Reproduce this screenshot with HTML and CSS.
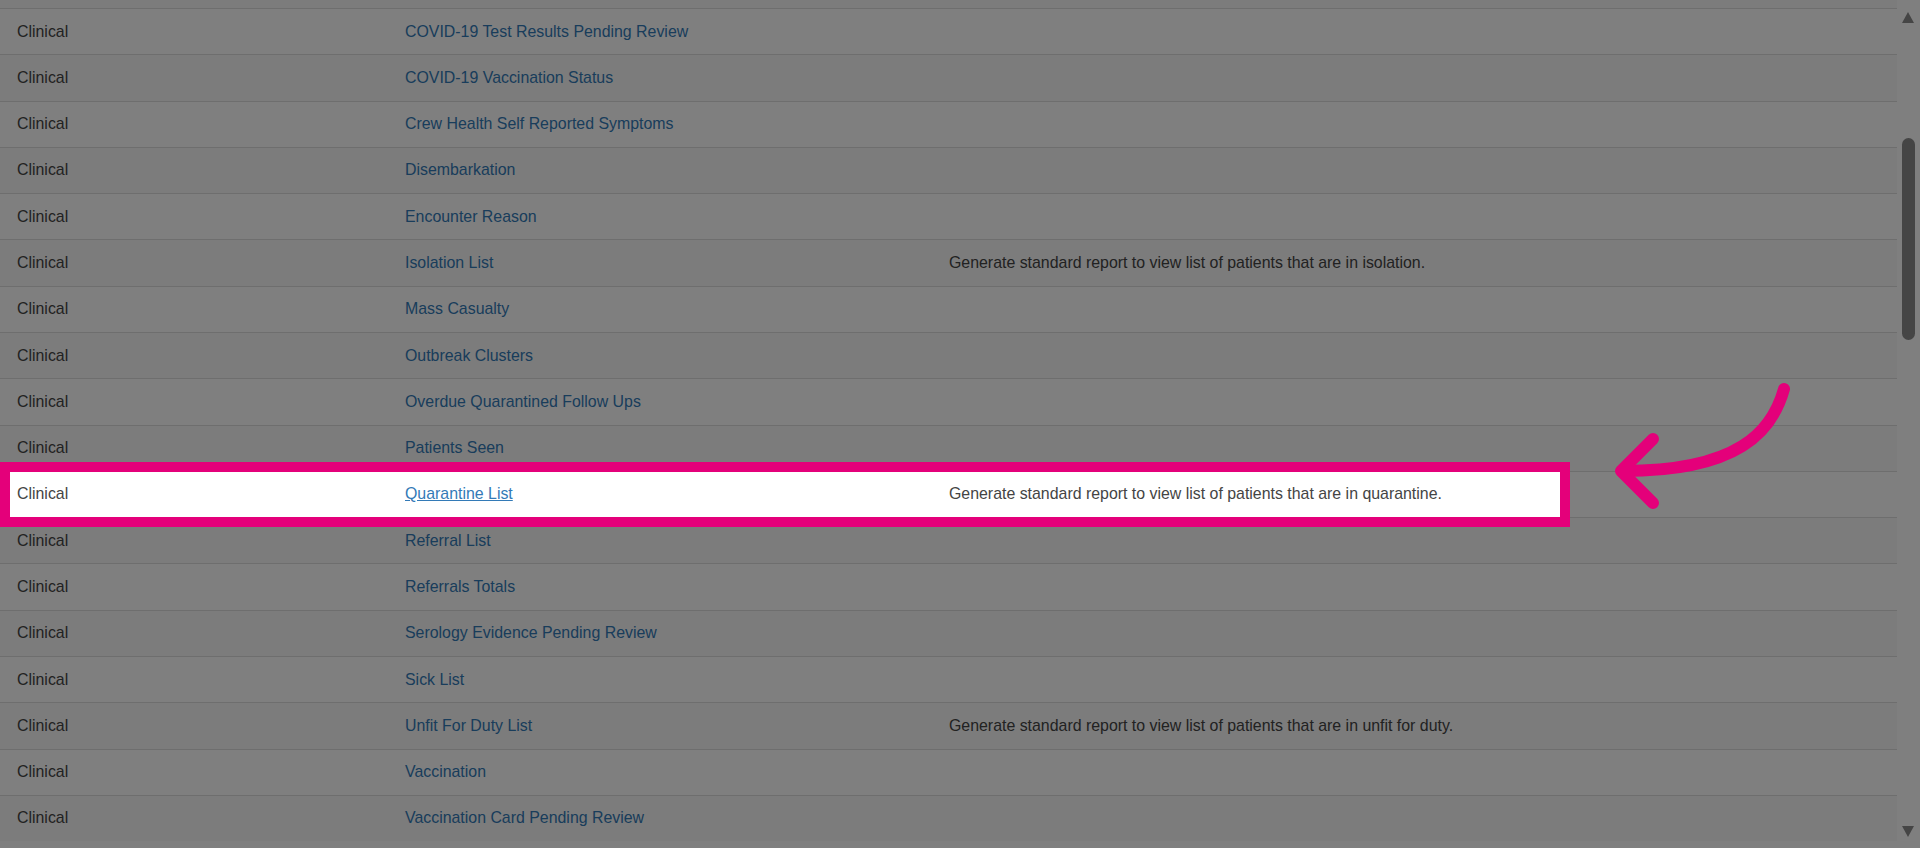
FILE: index.html
```html
<!DOCTYPE html>
<html lang="en">
<head>
    <meta charset="UTF-8">
    <title>Reports</title>
    <link rel="stylesheet" href="styles.css">
</head>
<body>
    <div class="page">
        <div class="report-list">
            <div class="row cut"></div>
            <div class="row"><div class="cell">Clinical</div><div class="cell"><a href="#">COVID-19 Test Results Pending Review</a></div><div class="cell"></div></div>
            <div class="row"><div class="cell">Clinical</div><div class="cell"><a href="#">COVID-19 Vaccination Status</a></div><div class="cell"></div></div>
            <div class="row"><div class="cell">Clinical</div><div class="cell"><a href="#">Crew Health Self Reported Symptoms</a></div><div class="cell"></div></div>
            <div class="row"><div class="cell">Clinical</div><div class="cell"><a href="#">Disembarkation</a></div><div class="cell"></div></div>
            <div class="row"><div class="cell">Clinical</div><div class="cell"><a href="#">Encounter Reason</a></div><div class="cell"></div></div>
            <div class="row"><div class="cell">Clinical</div><div class="cell"><a href="#">Isolation List</a></div><div class="cell">Generate standard report to view list of patients that are in isolation.</div></div>
            <div class="row"><div class="cell">Clinical</div><div class="cell"><a href="#">Mass Casualty</a></div><div class="cell"></div></div>
            <div class="row"><div class="cell">Clinical</div><div class="cell"><a href="#">Outbreak Clusters</a></div><div class="cell"></div></div>
            <div class="row"><div class="cell">Clinical</div><div class="cell"><a href="#">Overdue Quarantined Follow Ups</a></div><div class="cell"></div></div>
            <div class="row"><div class="cell">Clinical</div><div class="cell"><a href="#">Patients Seen</a></div><div class="cell"></div></div>
            <div class="row current">
                <div class="cell">Clinical</div>
                <div class="cell"><a href="#" class="hover">Quarantine List</a></div>
                <div class="cell">Generate standard report to view list of patients that are in quarantine.</div>
                <span class="spotlight"></span>
            </div>
            <div class="row"><div class="cell">Clinical</div><div class="cell"><a href="#">Referral List</a></div><div class="cell"></div></div>
            <div class="row"><div class="cell">Clinical</div><div class="cell"><a href="#">Referrals Totals</a></div><div class="cell"></div></div>
            <div class="row"><div class="cell">Clinical</div><div class="cell"><a href="#">Serology Evidence Pending Review</a></div><div class="cell"></div></div>
            <div class="row"><div class="cell">Clinical</div><div class="cell"><a href="#">Sick List</a></div><div class="cell"></div></div>
            <div class="row"><div class="cell">Clinical</div><div class="cell"><a href="#">Unfit For Duty List</a></div><div class="cell">Generate standard report to view list of patients that are in unfit for duty.</div></div>
            <div class="row"><div class="cell">Clinical</div><div class="cell"><a href="#">Vaccination</a></div><div class="cell"></div></div>
            <div class="row"><div class="cell">Clinical</div><div class="cell"><a href="#">Vaccination Card Pending Review</a></div><div class="cell"></div></div>
            <div class="row cut"></div>
        </div>
        <div class="scrollbar">
            <span class="sb-up"></span>
            <span class="sb-thumb"></span>
            <span class="sb-down"></span>
        </div>
    </div>

    <svg class="pointer" viewBox="1600 375 200 140" width="200" height="140">
        <path d="M1784 389 C1772 432 1738 471 1623 471" />
        <path d="M1653 439 L1621 471 L1653 503" />
    </svg>
</body>
</html>
```

FILE: styles.css
```css
html, body {
    margin: 0;
    height: 100%;
    overflow: hidden;
}
body {
    font-family: "Liberation Sans", Arial, sans-serif;
    font-size: 15.9px;
    color: #444;
    background: white;
}
.page {
    display: flex;
    height: 100vh;
}
.report-list {
    flex: 1;
}
.row {
    display: grid;
    grid-template-columns: 388px 544px 1fr;
    border-top: 1px solid #ddd;
    background: white;
}
.row:nth-child(odd) {
    background: #f8f8f8;
}
.row.cut {
    height: 8px;
    border-top: none;
}
.cell {
    padding: 11.65px 17px;
    line-height: 22px;
    white-space: nowrap;
}
.cell a {
    color: #337ab7;
    text-decoration: none;
}
.cell a.hover {
    text-decoration: underline;
}

/* highlighted row with dim overlay around it */
.row.current {
    position: relative;
}
.spotlight {
    position: absolute;
    left: 10px;
    top: 0;
    bottom: 0;
    width: 1550px;
    z-index: 10;
    box-shadow: 0 0 0 10px #e4007a, 0 0 0 4000px rgba(0, 0, 0, .5);
    pointer-events: none;
}

.scrollbar {
    width: 23px;
    flex-shrink: 0;
    display: flex;
    flex-direction: column;
    padding: 12px 5px 11px 5px;
    box-sizing: border-box;
}
.sb-up,
.sb-down {
    width: 0;
    height: 0;
    border-left: 6.5px solid transparent;
    border-right: 6.5px solid transparent;
}
.sb-up {
    border-bottom: 11px solid #8a8a8a;
}
.sb-down {
    margin-top: auto;
    border-top: 11px solid #8a8a8a;
}
.sb-thumb {
    margin-top: 115px;
    width: 13px;
    height: 202px;
    border-radius: 7px;
    background: #8a8a8a;
}

.pointer {
    position: absolute;
    left: 1600px;
    top: 375px;
    z-index: 11;
    fill: none;
    stroke: #e4007a;
    stroke-width: 12;
    stroke-linecap: round;
    stroke-linejoin: round;
}
```
